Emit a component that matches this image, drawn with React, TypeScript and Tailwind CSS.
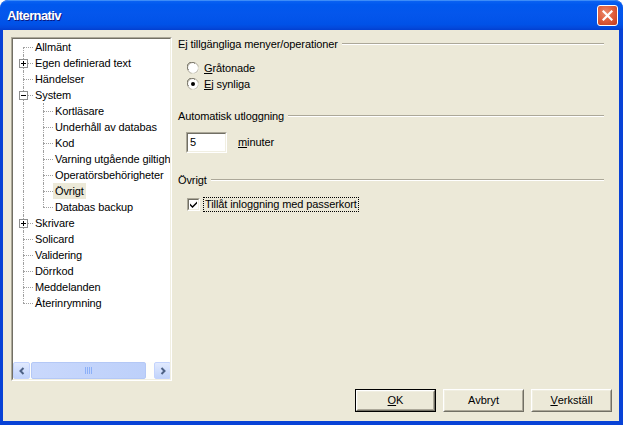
import React from "react";

type Item = {
  label: string;
  child?: boolean;
  exp?: "+" | "-";
  first?: boolean;
  last?: boolean;
  selected?: boolean;
};

const items: Item[] = [
  { label: "Allmänt", first: true },
  { label: "Egen definierad text", exp: "+" },
  { label: "Händelser" },
  { label: "System", exp: "-" },
  { label: "Kortläsare", child: true },
  { label: "Underhåll av databas", child: true },
  { label: "Kod", child: true },
  { label: "Varning utgående giltigh", child: true },
  { label: "Operatörsbehörigheter", child: true },
  { label: "Övrigt", child: true, selected: true },
  { label: "Databas backup", child: true, last: true },
  { label: "Skrivare", exp: "+" },
  { label: "Solicard" },
  { label: "Validering" },
  { label: "Dörrkod" },
  { label: "Meddelanden" },
  { label: "Återinrymning", last: true },
];

function Cell({ up, down, right, box }: { up: boolean; down: boolean; right: boolean; box?: "+" | "-" }) {
  return (
    <div className="relative w-[20px] h-[16px] shrink-0">
      {up && <div className="absolute left-[10px] top-0 h-[8px] border-l border-dotted border-[#A0A0A0]" />}
      {down && <div className="absolute left-[10px] top-[8px] h-[8px] border-l border-dotted border-[#A0A0A0]" />}
      {right && <div className="absolute left-[10px] top-[8px] w-[10px] border-t border-dotted border-[#A0A0A0]" />}
      {box && (
        <svg className="absolute left-[6px] top-[4px]" width="9" height="9" viewBox="0 0 9 9">
          <rect x="0.5" y="0.5" width="8" height="8" fill="#fff" stroke="#8E8F8F" />
          <line x1="2" y1="4.5" x2="7" y2="4.5" stroke="#000" />
          {box === "+" && <line x1="4.5" y1="2" x2="4.5" y2="7" stroke="#000" />}
        </svg>
      )}
    </div>
  );
}

function TreeRow({ item }: { item: Item }) {
  return (
    <div className="flex h-[16px] items-center">
      {item.child ? (
        <>
          <Cell up down right={false} />
          <Cell up down={!item.last} right />
        </>
      ) : (
        <Cell up={!item.first} down={!item.last} right box={item.exp} />
      )}
      <span
        className={`px-[2px] h-[16px] leading-[16px] whitespace-nowrap ${item.selected ? "bg-[#ECE9D8]" : ""}`}
      >
        {item.label}
      </span>
    </div>
  );
}

function Arrow({ dir }: { dir: "l" | "r" }) {
  return (
    <div className="w-[17px] h-[17px] shrink-0 rounded-[2px] border border-[#C3D3FD] bg-[linear-gradient(to_bottom,#E1EAFE,#C1D3FB)] flex items-center justify-center">
      <svg width="8" height="8" viewBox="0 0 8 8">
        <path
          d={dir === "l" ? "M5.5 1 L2.5 4 L5.5 7" : "M2.5 1 L5.5 4 L2.5 7"}
          stroke="#4D6185"
          strokeWidth="2"
          fill="none"
        />
      </svg>
    </div>
  );
}

function Tree() {
  return (
    <div className="w-[161px] h-[344px] border border-t-[#ACA899] border-l-[#ACA899] border-b-white border-r-white">
      <div className="w-full h-full border border-t-[#716F64] border-l-[#716F64] border-b-[#F1EFE2] border-r-[#F1EFE2] bg-white flex flex-col overflow-hidden">
        <div className="flex-1 overflow-hidden tracking-[-0.1px]">
          {items.map((it) => (
            <TreeRow key={it.label} item={it} />
          ))}
        </div>
        <div className="h-[17px] flex bg-[#FEFEFB] shrink-0">
          <Arrow dir="l" />
          <div className="flex-1 flex pl-[1px] pr-[8px]">
            <div className="w-[115px] h-[17px] rounded-[2px] border border-[#B4C8F6] bg-[linear-gradient(to_right,#C9D8FC,#BDD0FA)] flex items-center justify-center">
              <svg width="8" height="7" viewBox="0 0 8 7">
                {[0.5, 2.5, 4.5, 6.5].map((x) => (
                  <line key={x} x1={x} y1="0" x2={x} y2="7" stroke="#8CB0F8" />
                ))}
              </svg>
            </div>
          </div>
          <Arrow dir="r" />
        </div>
      </div>
    </div>
  );
}

function GroupHeader({ label }: { label: string }) {
  return (
    <div className="flex items-center h-[14px]">
      <span className="whitespace-nowrap">{label}</span>
      <div className="flex-1 ml-[4px] h-[2px] border-t border-b border-t-[#ACA899] border-b-white" />
    </div>
  );
}

function Radio({ checked, label, u }: { checked: boolean; label: string; u: string }) {
  return (
    <div className="flex items-center h-[16px] ml-[9px] gap-[5px]">
      <svg width="12" height="12" viewBox="0 0 12 12">
        <circle cx="6" cy="6" r="5.5" fill="#fff" stroke="#ACA899" />
        <path d="M1.5 8 A4.5 4.5 0 0 1 8 1.5" stroke="#716F64" fill="none" />
        <path d="M4 10.5 A4.5 4.5 0 0 0 10.5 4" stroke="#F1EFE2" fill="none" />
        {checked && <circle cx="6" cy="6" r="2" fill="#000" />}
      </svg>
      <span>
        <span className="underline">{u}</span>
        {label.slice(u.length)}
      </span>
    </div>
  );
}

function Button({ children, def }: { children: React.ReactNode; def?: boolean }) {
  const inner = (
    <div className="w-full h-full border border-t-white border-l-white border-b-[#716F64] border-r-[#716F64]">
      <div className="w-full h-full border border-t-[#F1EFE2] border-l-[#F1EFE2] border-b-[#ACA899] border-r-[#ACA899] flex items-center justify-center">
        {children}
      </div>
    </div>
  );
  return (
    <div className={`w-[81px] h-[23px] bg-[#ECE9D8] ${def ? "border border-black" : ""}`}>{inner}</div>
  );
}

export default function App() {
  return (
    <div className="w-[623px] h-[425px] flex flex-col rounded-t-[8px] bg-[#0842D6] font-['Liberation_Sans',Arial,sans-serif] text-[11px] text-black overflow-hidden">
      <div className="h-[30px] shrink-0 flex items-center justify-between pl-[7px] pr-[5px] rounded-t-[8px] border-t border-[#3C8CF8] bg-[linear-gradient(to_bottom,#0A62F3_0%,#0058EE_12%,#0456EC_45%,#0052E8_80%,#0349DC_92%,#023FD0_100%)]">
        <span className="text-white font-bold text-[13px] tracking-[-0.6px] [text-shadow:1px_1px_#0A1883]">Alternativ</span>
        <div className="w-[21px] h-[21px] rounded-[3px] border border-white bg-[radial-gradient(circle_at_40%_35%,#E98A6C_0%,#E0613F_45%,#C33A1C_100%)] flex items-center justify-center">
          <svg width="11" height="11" viewBox="0 0 11 11">
            <path d="M1.5 1.5 L9.5 9.5 M9.5 1.5 L1.5 9.5" stroke="#fff" strokeWidth="2.2" strokeLinecap="square" />
          </svg>
        </div>
      </div>
      <div className="flex-1 ml-[3px] mr-[4px] mb-[4px] bg-[#ECE9D8] flex flex-col">
        <div className="flex pt-[7px] pl-[8px]">
          <Tree />
          <div className="ml-[6px] w-[426px] flex flex-col tracking-[-0.1px]">
            <GroupHeader label="Ej tillgängliga menyer/operationer" />
            <div className="mt-[9px]">
              <Radio checked={false} label="Gråtonade" u="G" />
              <Radio checked label="Ej synliga" u="E" />
            </div>
            <div className="mt-[17px]">
              <GroupHeader label="Automatisk utloggning" />
            </div>
            <div className="mt-[9px] flex items-center ml-[8px]">
              <div className="w-[41px] h-[21px] border border-t-[#ACA899] border-l-[#ACA899] border-b-white border-r-white">
                <div className="w-full h-full border border-t-[#716F64] border-l-[#716F64] border-b-[#F1EFE2] border-r-[#F1EFE2] bg-white flex items-center pl-[2px]">
                  5
                </div>
              </div>
              <span className="ml-[11px]">
                <span className="underline">m</span>inuter
              </span>
            </div>
            <div className="mt-[20px]">
              <GroupHeader label="Övrigt" />
            </div>
            <div className="mt-[9px] flex items-center h-[16px] ml-[9px]">
              <div className="w-[13px] h-[13px] border border-t-[#ACA899] border-l-[#ACA899] border-b-white border-r-white">
                <div className="w-full h-full border border-t-[#716F64] border-l-[#716F64] border-b-[#F1EFE2] border-r-[#F1EFE2] bg-white flex items-center justify-center">
                  <svg width="7" height="7" viewBox="0 0 7 7">
                    <path d="M0 2.5 L2.5 5 L7 0.5 L7 2.5 L2.5 7 L0 4.5 Z" fill="#000" />
                  </svg>
                </div>
              </div>
              <span className="ml-[4px] px-[1px] leading-[13px] outline outline-1 outline-dotted outline-black">
                Tillåt inloggning med passerkort
              </span>
            </div>
          </div>
        </div>
        <div className="mt-[8px] flex justify-end gap-[7px] pr-[7px]">
          <Button def>
            <span className="underline">O</span>K
          </Button>
          <Button>Avbryt</Button>
          <Button>
            <span className="underline">V</span>erkställ
          </Button>
        </div>
      </div>
    </div>
  );
}
